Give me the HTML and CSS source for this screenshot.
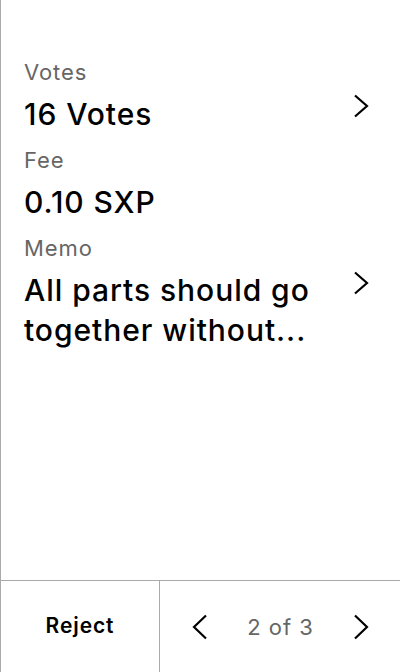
FILE: index.html
```html
<!DOCTYPE html>
<html>
<head>
<meta charset="utf-8">
<link rel="stylesheet" href="styles.css">
</head>
<body>
<div class="screen">
  <main class="content">
    <div class="field">
      <div class="label">Votes</div>
      <div class="value-row">
        <div class="value">16 Votes</div>
        <svg class="chev" width="16" height="24" viewBox="0 0 16 24"><polyline points="2,1.5 14,12 2,22.5" fill="none" stroke="#000" stroke-width="2.2"/></svg>
      </div>
    </div>
    <div class="field">
      <div class="label">Fee</div>
      <div class="value-row">
        <div class="value">0.10 SXP</div>
      </div>
    </div>
    <div class="field">
      <div class="label">Memo</div>
      <div class="value-row value-row-memo">
        <div class="value memo">All parts should go together without...</div>
        <svg class="chev" width="16" height="24" viewBox="0 0 16 24"><polyline points="2,1.5 14,12 2,22.5" fill="none" stroke="#000" stroke-width="2.2"/></svg>
      </div>
    </div>
  </main>
  <footer class="footer">
    <div class="reject">Reject</div>
    <div class="pager">
      <svg class="nav" width="16" height="26" viewBox="0 0 16 26"><polyline points="14,1.5 2,13 14,24.5" fill="none" stroke="#000" stroke-width="2.2"/></svg>
      <span class="count">2 of 3</span>
      <svg class="nav" width="16" height="26" viewBox="0 0 16 26"><polyline points="2,1.5 14,13 2,24.5" fill="none" stroke="#000" stroke-width="2.2"/></svg>
    </div>
  </footer>
</div>
</body>
</html>
```
FILE: styles.css
```css
* { box-sizing: border-box; }
html, body { margin: 0; padding: 0; background: #fff; }
body { font-family: Inter, "Noto Sans", sans-serif; color: #000; }
.screen {
  width: 400px;
  height: 672px;
  border-left: 1px solid #aaa;
  display: flex;
  flex-direction: column;
}
.content {
  flex: 1;
  padding: 58px 31px 0 23px;
}
.field { margin-bottom: 12px; }
.label {
  font-size: 22px;
  line-height: 28px;
  letter-spacing: 0.9px;
  color: #666;
}
.value-row {
  display: flex;
  justify-content: space-between;
  align-items: flex-start;
  margin-top: 8px;
}
.value-row-memo { margin-top: 8px; }
.value {
  font-size: 30px;
  line-height: 40px;
  font-weight: 500;
  letter-spacing: 0.95px;
}
.memo { width: 310px; }
.chev { flex: none; margin-top: 0; }
.value-row-memo .chev { margin-top: 1px; }
.footer {
  height: 92px;
  border-top: 1px solid #aaa;
  display: flex;
}
.reject {
  width: 159px;
  border-right: 1px solid #aaa;
  display: flex;
  align-items: center;
  justify-content: center;
  font-size: 21px;
  font-weight: 600;
  letter-spacing: 0.9px;
  padding-bottom: 2px;
}
.pager {
  flex: 1;
  display: flex;
  align-items: center;
  justify-content: space-between;
  padding: 0 31px 0 32px;
}
.count {
  font-size: 22px;
  letter-spacing: 1px;
  color: #666;
}
```
